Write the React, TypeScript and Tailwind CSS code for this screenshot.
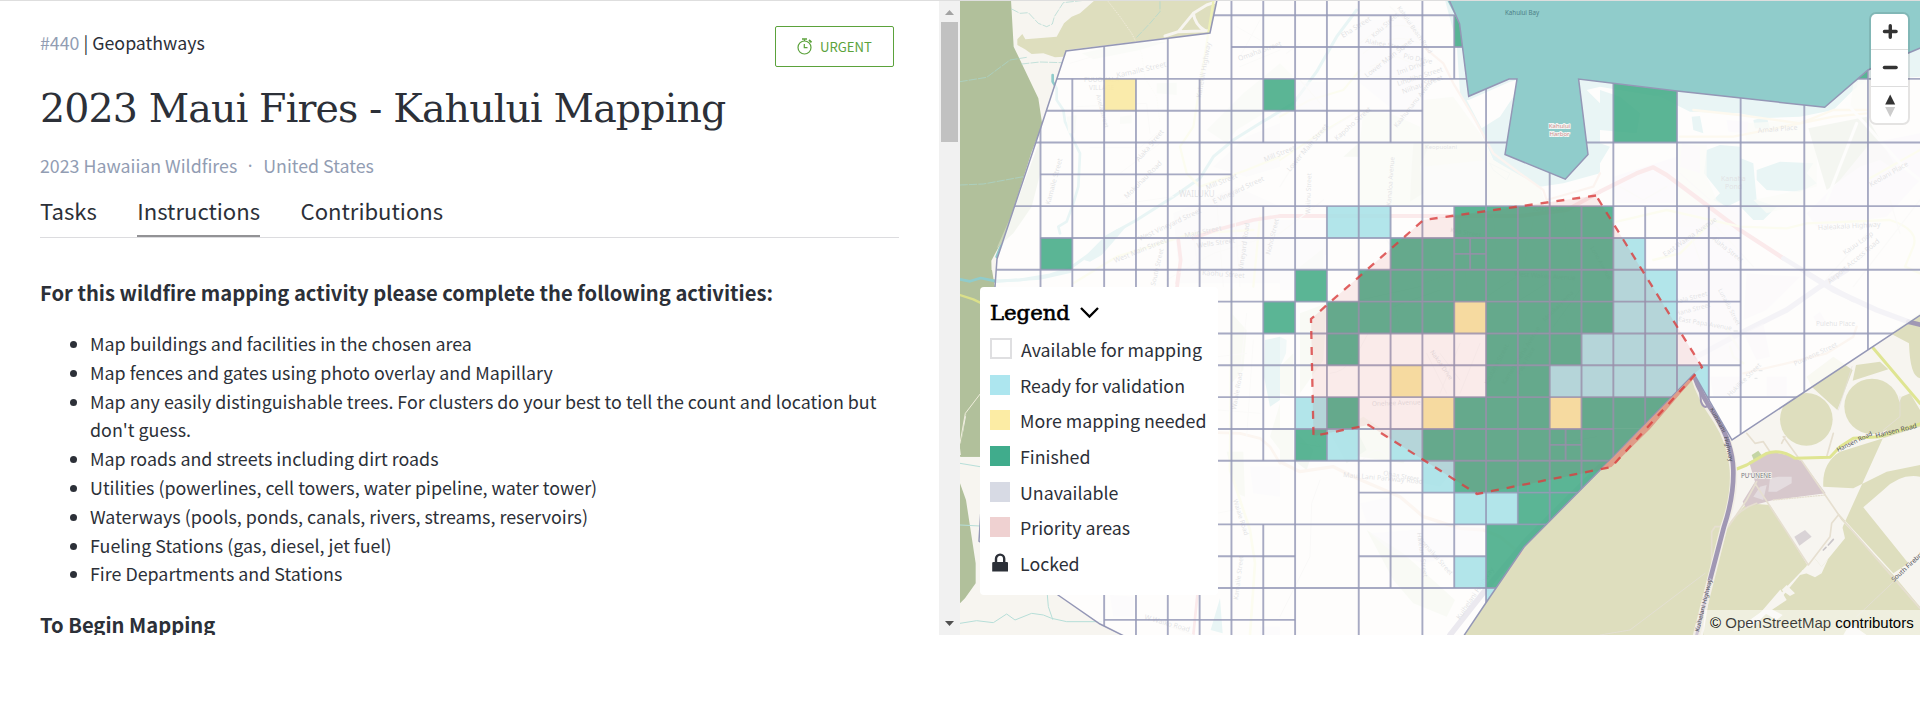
import type { ReactNode } from "react";

const SANS = "font-['Noto_Sans_CJK_SC','Noto_Sans',sans-serif]";
const SLAB = "font-['DejaVu_Serif',serif]";

const activities = [
  "Map buildings and facilities in the chosen area",
  "Map fences and gates using photo overlay and Mapillary",
  "Map any easily distinguishable trees. For clusters do your best to tell the count and location but don't guess.",
  "Map roads and streets including dirt roads",
  "Utilities (powerlines, cell towers, water pipeline, water tower)",
  "Waterways (pools, ponds, canals, rivers, streams, reservoirs)",
  "Fueling Stations (gas, diesel, jet fuel)",
  "Fire Departments and Stations",
];

const legend = [
  { label: "Ready for validation", swatch: "bg-[#ade6ef]" },
  { label: "More mapping needed", swatch: "bg-[#fceca4]" },
  { label: "Finished", swatch: "bg-[#40ac8c]" },
  { label: "Unavailable", swatch: "bg-[#d7dae4]" },
  { label: "Priority areas", swatch: "bg-[#efd1d1]" },
];

/* ---------- task grid ---------- */

const STEP = 31.825;
const gx = (i: number) => 1040.5 + i * STEP;
const gy = (j: number) => 15.2 + j * STEP;

const BOUNDARY =
  "M1218,-5 L1210,33 L1066,51 L1041,127 L997,259 L995,287 L979,541 L1058,595 L1100,624 L1126,637 L1463,637 L1486.5,602 L1524,547 L1613,457 L1694,374 L1732,440 L1925,312 L1925,46 L1868,70 L1824.7,107.3 L1677,91 L1578.6,79 L1588,154.5 L1565.3,179.2 L1505,154.5 L1517,79 L1509,79 L1468.7,96.3 L1459.6,24 L1447,-5 Z";

// [column, row start, row end]
const verticals: [number, number, number][] = [
  [0, 3, 9], [1, 2, 17], [2, 0, 20], [3, 2, 20], [4, 0, 20], [5, 2, 20], [6, -1, 20],
  [7, -1, 4], [7, 6, 14], [7, 16, 20], [8, -1, 20], [9, -1, 4], [9, 6, 14], [10, -1, 20],
  [11, 0, 4], [11, 6, 18], [12, -1, 20], [13, 0, 2], [13, 6, 18], [13.5, 7, 8], [14, 1, 20],
  [15, 6, 16], [16, 4, 16], [16.5, 13, 14], [17, 6, 16], [18, 2, 16], [19, 6, 15],
  [20, 2, 14], [21, 6, 13], [22, 2, 16], [24, 2, 14], [26, 0, 12],
];

// [row, column start, column end]
const horizontals: [number, number, number][] = [
  [0, 5, 14], [1, 6, 14], [2, -2, 14], [2, 25, 28], [3, -2, 12], [4, -2, 28], [5, 0, 6],
  [6, -2, 28], [7, 0, 22], [7.5, 13, 14], [8, -2, 28], [9, 5, 22], [10, 5, 28], [11, 5, 22],
  [12, 5, 28], [13, 5, 18], [13.5, 16, 17], [14, 5, 19], [15, 10, 18], [16, 5, 17],
  [17, 5, 8], [17, 10, 14], [18, 5, 16], [19, 2, 8],
];

// [column, row, width, height]
type Cell = [number, number, number, number];

const finished: Cell[] = [
  [0, 7, 1, 1], [7, 2, 1, 1], [13, 0, 1, 1], [8, 8, 1, 1], [7, 9, 1, 1], [18, 2, 2, 2], [25, 1, 1, 1],
  [13, 6, 5, 1], [11, 7, 7, 1], [10, 8, 8, 1], [9, 9, 4, 1], [14, 9, 4, 1], [9, 10, 1, 1],
  [14, 10, 3, 1], [14, 11, 2, 1], [9, 12, 1, 1], [13, 12, 3, 1], [17, 12, 4, 1], [8, 13, 1, 1],
  [12, 13, 8, 1], [13, 14, 6, 1], [15, 15, 3, 1], [14, 16, 3, 2],
];
const ready: Cell[] = [
  [9, 6, 2, 1], [18, 7, 1, 1], [18, 8, 2, 1], [18, 9, 2, 1], [17, 10, 3, 1], [16, 11, 5, 1],
  [8, 12, 1, 1], [9, 13, 1, 1], [11, 13, 1, 1], [12, 14, 1, 1], [13, 15, 2, 1], [13, 17, 1, 1], [14, 18, 1, 1],
];
const moreMapping: Cell[] = [[2, 2, 1, 1], [13, 9, 1, 1], [11, 11, 1, 1], [12, 12, 1, 1], [16, 12, 1, 1]];

function Cells({ cells, fill, opacity }: { cells: Cell[]; fill: string; opacity: number }) {
  return (
    <g fill={fill} fillOpacity={opacity}>
      {cells.map(([i, j, w, h]) => (
        <rect key={`${i}-${j}`} x={gx(i)} y={gy(j)} width={w * STEP} height={h * STEP} />
      ))}
    </g>
  );
}

// [text, x, y, angle, size]
type Label = [string, number, number, number, number];

const streets: Label[] = [
  ["Kamaile Street", 1117, 78, -13, 7.5], ["VILLAGE", 1089, 90, 0, 6.5], ["PUUOHALA", 1084, 82, 0, 6.5],
  ["Kahekili Highway", 1201, 98, -80, 7], ["Omaha Street", 1239, 61, -20, 7], ["Anela Street", 1096, 95, 75, 6],
  ["Alaka Street", 1139, 162, -50, 7], ["Mokuhau Road", 1127, 199, -45, 7], ["Kamaile Street", 1050, 205, -75, 7],
  ["WAILUKU", 1179, 197, 0, 8], ["Mill Street", 1207, 190, -22, 7], ["E Vineyard Street", 1214, 204, -25, 7],
  ["West Vineyard Street", 1140, 241, -25, 7], ["Main Street", 1185, 238, -12, 7], ["Wells Street", 1197, 248, -8, 7],
  ["West Main Street", 1115, 263, -22, 7], ["South Street", 1155, 286, -77, 6.5], ["Vineyard Road", 1243, 270, -82, 7],
  ["Noho Street", 1270, 255, -76, 6.5], ["Kaohu Street", 1202, 275, 4, 7], ["Mill Street", 1265, 162, -22, 7],
  ["Eha Street", 1343, 38, -32, 7], ["Kolu Street", 1374, 38, -42, 6.5], ["Alahee Street", 1365, 43, 10, 6.5],
  ["Lower Main Street", 1367, 78, -38, 7], ["Pio Drive", 1403, 58, 12, 7], ["Imi Drive", 1398, 75, -20, 7],
  ["Liholiho Street", 1398, 86, -18, 7], ["Niihau Street", 1403, 94, -20, 7], ["Kahului Beach Road", 1397, 8, 55, 6],
  ["Kaahumanu Avenue", 1397, 128, -52, 6.5], ["Kapoho Street", 1337, 141, -42, 7], ["Lower Main Street", 1290, 172, -50, 7],
  ["Waiinu Street", 1310, 214, -88, 6.5], ["Kanaloa Avenue", 1391, 206, -86, 6.5], ["Keopuolani", 1425, 149, 0, 6],
  ["KAHULUI", 1533, 211, 0, 7], ["Amala Place", 1758, 133, -5, 7], ["Kanaha", 1721, 181, 0, 7], ["Pond", 1725, 189, 0, 7],
  ["Keolani Place", 1871, 187, -30, 7], ["Haleakala Highway", 1818, 230, -3, 7], ["Kauu Loop", 1845, 255, -35, 7],
  ["Airport Access Road", 1830, 284, -40, 7], ["East Wakea Avenue", 1665, 257, -35, 7], ["Alaha Street", 1712, 240, 38, 6.5],
  ["Kala Street", 1676, 304, -15, 6.5], ["Hana Street", 1676, 316, -15, 6.5], ["East Papa Avenue", 1678, 321, 10, 6.5],
  ["Lunalilo Street", 1718, 290, 62, 6], ["Puunene Street", 1795, 366, -25, 6.5], ["Hukilike Street", 1730, 397, -45, 6.5],
  ["Pulehu Place", 1816, 326, 0, 6.5], ["West Wakea Avenue", 1514, 276, 4, 6.5], ["Kea Street", 1450, 232, 10, 6.5],
  ["Onehee Avenue", 1372, 406, -2, 6.5], ["Ohaa Street", 1383, 475, 10, 6.5], ["Maui Lani Parkway Road", 1343, 477, 5, 7],
  ["Waiale Road", 1233, 500, 72, 6.5], ["Kamaile Street", 1238, 600, -83, 6.5], ["Waiale Road", 1236, 410, -80, 6.5],
  ["W Waiko Road", 1144, 619, 16, 7], ["Halelani Street", 1417, 533, 82, 6.5],
  ["Pomaikai Street", 1418, 540, 48, 6.5], ["Kuihelani Highway", 1460, 620, -56, 7], ["Nakoa Drive", 1430, 352, 55, 6],
  ["Kaulana Street", 1488, 385, -62, 6.5], ["Kamehameha Avenue", 1505, 385, -58, 6.5], ["Papa Place", 1520, 375, -60, 6],
  ["Molokai Hema", 1545, 322, -45, 6], ["Lono Avenue", 1590, 248, 60, 6],
];

const outerLabels: Label[] = [
  ["Hansen Road", 1838, 452, -26, 6.2], ["Hansen Road", 1876, 438, -14, 6.8], ["South Firebreak", 1894, 582, -43, 6.5],
];

function Labels({ items, fill }: { items: Label[]; fill: string }) {
  return (
    <g fill={fill} fontFamily="Noto Sans, sans-serif">
      {items.map(([text, x, y, angle, size], k) => (
        <text key={k} x={x} y={y} fontSize={size} transform={`rotate(${angle} ${x} ${y})`}>{text}</text>
      ))}
    </g>
  );
}

/* Artwork tiles are drafted on a 3x grid and scaled down to map units. */
function Tile({ x, y, children }: { x: number; y: number; children: ReactNode }) {
  return <g transform={`translate(${x} ${y}) scale(.33333)`}>{children}</g>;
}

function BaseMap() {
  return (
    <g fill="none" strokeLinejoin="round" strokeLinecap="round">
      <rect x="960" y="0" width="960" height="636" fill="#f7f5f0" />
      <Tile x={960} y={0}>
        <path fill="#b1c09b" d="M0 0H153L161 140L235 295L247 375L215 455L163 620L130 715L94 782L96 860V1060L60 1190L15 1240L0 1370Z" />
        <path fill="#dedebe" d="M405 0H775L750 98L320 150L310 170L285 172L250 160L215 162L195 148L172 135L172 118L187 102L196 118L290 110L312 70L335 50L360 40Z" />
        <path stroke="#f7f5f0" strokeWidth="9" d="M615 108L655 95L700 40L740 15L770 5M655 95L745 92M700 40Q705 75 735 92" />
        <path stroke="#f0ead9" strokeWidth="3" strokeDasharray="2 6" d="M445 5L480 50L515 100L525 120L545 160L555 235L590 290L600 370" />
        <path stroke="#a9d6cf" strokeWidth="2" strokeDasharray="22 6" d="M155 27L180 40L205 38L235 70L260 80L277 72L283 50L310 8L380 0M0 245L80 232L150 180L200 172M185 192L240 186L305 188M0 555L70 552L190 530M600 5V35L570 70L530 112" />
        <path stroke="#90cccb" strokeWidth="8" d="M278 225V245L290 265V300L310 330L315 365L340 420L360 460L355 560L340 610L320 665L295 680L300 700M110 770L130 720" />
        <path stroke="#90cccb" strokeWidth="9" d="M0 838L60 845L180 840L270 825L330 805L385 765L440 710L530 660L640 590L720 535L760 470L820 420L900 370L1000 310L1070 215L1130 110L1190 30" />
        <path fill="#90cccb" d="M372 780L425 720L470 688L500 678L460 725L425 765L390 785Z" />
        <path fill="#e7eadb" d="M740 390L850 280L960 190V310L830 390L800 430ZM365 160L500 130L620 125L540 150L400 178ZM320 350L350 345L345 400L325 400ZM480 350L515 345V370L480 372ZM590 250L650 248V285L590 280Z" />
        <path fill="#c8d3b5" d="M240 420L241 520L215 620L160 700L110 745L165 620Z" />
        <path fill="#e6dfe6" d="M760 500L860 410L960 370V500L860 530ZM640 640L830 560L960 620V850H660Z" opacity=".6" />
        <path stroke="#edf0b5" strokeWidth="7" d="M760 5L700 380L660 440L680 520L720 560L860 510L960 470M340 850L470 770L700 700L880 690M900 650L880 860" />
        <path stroke="#e8959b" strokeWidth="11" d="M960 648L880 660L760 692L700 715M655 720L662 780L650 870" />
        <path stroke="#ebe6e0" strokeWidth="3" d="M330 190L430 160M350 320L560 310L570 400M390 443L540 443L590 400M480 520L600 430M430 620L640 590M700 700L720 860M770 600L790 860M820 590L840 860M620 840L760 760L960 700M830 80L900 120M840 200L960 150M840 170L900 60" />
      </Tile>
      <Tile x={1280} y={0}>
        <path fill="#90cccb" d="M495 0H960V570H780L640 480L600 390L540 280L530 130Z" />
        <path fill="#f7f5f0" d="M566 300L690 245L712 240L700 290L660 350L605 385L560 300ZM960 520V640H840L780 560L850 550ZM920 270L960 260V310Z" />
        <path fill="#e8ebd8" d="M430 300L520 290L600 400L640 480L780 560L800 618H430Z" />
        <path fill="#eaeedd" d="M240 430H426V618H240ZM250 330L330 340L420 380V426H240ZM0 190L40 230L0 250Z" />
        <path fill="#dbe2c8" d="M400 430H450L420 500L430 580L390 605L395 500ZM190 470L235 430V470ZM60 800L130 745V870H45Z" />
        <path stroke="#efc9b5" strokeWidth="7" d="M430 140L490 190L520 250L580 350L640 460L720 520L790 570L800 600L940 560L960 520" />
        <path stroke="#e8959b" strokeWidth="12" d="M0 648H720L860 630L960 575" />
        <path stroke="#edf0b5" strokeWidth="6" d="M0 350L90 300L190 270L240 210M0 480L120 400L240 330" />
        <path fill="#ece6ec" opacity=".6" d="M50 245H140V330H50ZM240 60H420V330H340L240 250ZM430 500L620 480V618H430ZM0 660H140V870H0Z" />
        <path stroke="#ebe6e0" strokeWidth="4" d="M240 130Q330 50 420 90M250 160Q330 90 420 130M270 200L350 170L420 200M280 230L420 230M330 20L420 100M20 160L60 130M0 560L80 430L240 330M60 240L130 320M0 700L130 600M320 720L420 860M440 720L480 860M540 660L560 860M640 650L660 860M760 660L720 860M850 640L880 860" />
        <path stroke="#d5dccb" strokeWidth="3" d="M630 490L690 520L680 540L640 510Z" />
      </Tile>
      <Tile x={1600} y={0}>
        <path fill="#90cccb" d="M0 0H960V230L800 240L760 270L700 330L600 350L480 355L420 340L270 335L180 290L0 260ZM0 270L60 290L120 340L110 400L0 390ZM0 430L30 440L0 490Z" />
        <path fill="#f7f5f0" d="M775 240H960V300H760Z" opacity=".7" />
        <path fill="#90cccb" d="M320 450L360 435L422 440V600L380 620L340 600L360 580L312 520ZM422 475L460 490L470 600L530 620L490 660H460L422 620ZM275 350L300 348L310 400L280 390ZM460 360L500 350L510 385L465 385ZM470 510L540 485L640 490L620 520L650 550L600 575L500 570L470 540Z" />
        <path fill="#e9ecd9" opacity=".7" d="M232 435H320V530L350 600L422 650V680H232ZM430 370L612 360V610L500 640L460 600L650 560V430H440ZM760 250L806 235V330H750Z" />
        <path fill="#c9d2ba" d="M625 385L800 350L900 520L840 480L780 500L680 570Z" />
        <path fill="#ece4ec" d="M140 290L230 280V426H180L150 400ZM380 360L445 365L440 400L385 395ZM810 430L960 400V540L860 650L650 680L620 640L720 540ZM245 430L300 440V520L240 500ZM232 620H422V870H232ZM40 530L230 470L225 610H50Z" opacity=".8" />
        <path stroke="#e8959b" strokeWidth="13" d="M0 575L110 520L160 502L200 525L420 690L550 775" />
        <path stroke="#c9c2d4" strokeWidth="14" d="M550 775L690 860L760 900" />
        <path stroke="#f2dfae" strokeWidth="7" d="M280 330L420 345L600 370L700 330L800 330M240 410L400 410L700 350L800 340" />
        <path stroke="#edf0b5" strokeWidth="7" d="M50 665L200 630L420 680L560 685L620 670L870 660Q960 690 940 740L915 800L960 820M810 535L960 450M160 780L240 760L330 670" />
        <path stroke="#f6f2ee" strokeWidth="9" d="M740 310L910 500L960 540M770 370L680 600" />
        <path stroke="#ebe6e0" strokeWidth="4" d="M760 860L960 600M650 870L800 700M340 670L460 800M270 700L330 860M60 560L130 600L200 560M240 520L330 600M870 600L900 700" />
      </Tile>
      <Tile x={960} y={270}>
        <path fill="#b1c09b" d="M0 0H96L105 55H60V380L15 440L0 500V555H65V560H0ZM0 640L18 690L47 880V940L15 985L0 1000Z" />
        <path stroke="#f0eedd" strokeWidth="3" d="M62 370L16 430L0 520" />
        <path fill="#b1c09b" d="M62 374L19 432L3 520V560H62Z" />
        <path stroke="#90cccb" strokeWidth="8" d="M0 28L30 34L62 24L110 34L240 25L330 5" />
        <path stroke="#dbe08a" strokeWidth="7" d="M0 75L40 88L65 100" />
        <path stroke="#b6ded8" strokeWidth="3" d="M0 1060L50 1052L100 1058L140 1032L165 1050L215 1030L250 1035L275 1045L320 1055H425M262 975L265 1010L278 1048M0 765L60 768M0 580L60 590" />
        <path fill="#90cccb" d="M915 210L960 200V390L930 410L912 320ZM752 1080L780 985L788 1090Z" />
        <path fill="#dfe6cc" d="M770 80L860 180L850 300L815 340V130ZM800 545L850 545L855 680L830 670ZM960 400V540L930 500Z" />
        <path stroke="#f0cfb8" strokeWidth="8" d="M774 488L840 490L900 505L930 530L960 580" />
        <path stroke="#edf0b5" strokeWidth="8" d="M815 60L810 600L870 780L885 880L870 1095" />
        <path stroke="#e8959b" strokeWidth="8" d="M655 0L650 40M712 975L700 1095" />
        <path fill="#ece6ec" opacity=".7" d="M870 590H960V680L880 670ZM450 975L520 980V1040H460ZM900 1070H960V1095H900Z" />
        <path stroke="#ebe6e0" strokeWidth="3" d="M774 260L860 250M860 130L830 400M774 420L900 430M880 210L860 500M770 730L820 720M560 1045L700 1095" />
      </Tile>
      <Tile x={1280} y={270}>
        <path fill="#dedebe" d="M960 596L730 830L552 1095H960Z" />
        <path fill="#dfe6cc" d="M0 290L40 250V380L0 370ZM60 130L140 100L130 270L60 370ZM0 480H40V570H0ZM180 480L250 440L400 540L370 580L240 560ZM260 780L370 850L525 990L500 1040L400 1000L340 930Z" />
        <path fill="#b1c9a4" d="M140 470L230 480L260 540L200 580ZM50 490L100 540L80 600L40 570Z" opacity=".6" />
        <path fill="#90cccb" d="M0 200L20 210L18 250L0 290ZM430 590L520 600L480 650L430 640Z" opacity=".6" />
        <path stroke="#f0cfb8" strokeWidth="10" d="M0 575L60 605L160 590L220 620L360 680L430 740L540 775L610 780L660 800L720 850" />
        <path stroke="#9a8fb0" strokeWidth="17" d="M960 590L740 810L640 930L510 1095" />
        <path fill="#ece6ec" opacity=".6" d="M240 700L330 680V760H260ZM270 790L510 770L520 860L430 880L340 850ZM430 770H610V860H430Z" />
        <path stroke="#e5dfdb" strokeWidth="3" d="M270 0V180L210 290M330 20L360 180M430 40L540 0M440 250L500 370M480 250L540 330M540 220L480 370M600 220L540 370M700 190L640 330M740 200L690 330M810 20L870 180M150 310Q240 300 210 180M60 520Q100 480 140 560M240 580Q300 500 330 580M0 1040L40 960L90 860L95 700L120 630" />
        <path stroke="#5c6f66" strokeWidth="2" opacity=".4" d="M240 90L420 50M340 110L480 60M620 80L710 20M720 90L800 40M820 170L900 60M60 520L120 530M840 520L950 500" />
      </Tile>
      <Tile x={1600} y={270}>
        <path fill="#dedebe" d="M0 596L283 310L330 400L395 520L403 600L375 770L290 1095H0ZM340 900L380 770L440 700L510 705L622 885L540 960L480 1030L390 1095H310ZM635 350L712 420L758 300L700 260L620 320ZM768 285L840 275L865 298L758 332ZM870 190L960 130V325Q930 320 927 220ZM905 380L930 370L960 420V470L720 545Q665 580 670 650L760 655L860 605L960 585V620Q900 610 850 660L790 712L925 880L880 910L715 730L735 805L665 890L640 860L690 800L715 740L880 915L960 1010V1095H380L500 1030L560 990L530 940L625 885L665 910Z" />
        <path fill="#f7f5f0" d="M605 900L650 895L665 910L645 922L615 908ZM560 945L585 970L570 978L545 960ZM500 1010L548 1035L530 1050L495 1030ZM400 1085L520 1000L560 950L620 888L640 870L665 890L640 905L600 915L530 1000L470 1060ZM750 1060L800 1095H730Z" />
        <circle cx="619" cy="448" r="79" fill="#dedebe" />
        <circle cx="816" cy="409" r="83" fill="#dedebe" />
        <path fill="#f7f5f0" d="M520 700L677 672L720 740L735 805L665 890L640 860L622 885Z" />
        <path fill="#d7c8cc" d="M447 575L515 545L560 555L605 572L677 670L520 690L437 712L428 695L465 635Z" />
        <path fill="#d9d3d6" d="M583 800L615 780L635 800L598 827Z" />
        <path fill="#e4dcdf" d="M510 625L535 620L575 620V640L530 665H505ZM480 650L500 645L490 690L460 680Z" />
        <path fill="#c4d5a5" d="M455 555L475 542L485 556L462 572Z" />
        <path stroke="#e6dfd0" strokeWidth="5" d="M440 490L465 520L490 515L510 545M550 500L600 570M545 520L555 500M700 490L680 560M605 572L720 740L960 1015M465 640L625 885L690 800L695 760L715 735M470 635L440 690L385 770M345 770L335 785V890L320 940M470 700Q410 720 385 770L345 770" />
        <path stroke="#e6dfdc" strokeWidth="2" d="M0 1095L90 1080L315 910M770 1040L960 860M756 290L715 420M900 380V440L850 480" />
        <path stroke="#e6dfd0" strokeWidth="4" strokeDasharray="3 5" d="M520 690L677 675" />
        <path stroke="#dfe592" strokeWidth="9" d="M403 600L440 585L500 550Q540 535 585 565L690 562L720 530L760 505L840 500L960 462M820 235L960 400" />
        <path stroke="#f2eee6" strokeWidth="22" d="M283 318Q300 380 350 450Q395 520 400 600T372 770L290 1095" />
        <path stroke="#a097b4" strokeWidth="14" d="M283 318Q300 370 345 435Q398 520 400 600T372 770L330 930" />
        <path stroke="#cfc8d6" strokeWidth="9" d="M330 930L290 1095" />
        <path stroke="#a097b4" strokeWidth="6" d="M297 330L303 395Q312 420 325 405" />
        <path stroke="#c9c2d4" strokeWidth="16" d="M290 260L420 190L560 120L660 50L740 0M620 10L700 60L830 120L925 155" />
        <path stroke="#a097b4" strokeWidth="14" d="M925 155L975 168" />
        <path stroke="#edf0b5" strokeWidth="7" d="M390 230L400 260L430 280M380 180L420 240" />
        <path stroke="#f0cfb8" strokeWidth="7" d="M430 310L560 280L680 250L760 200L770 170" />
        <path fill="#e6deea" d="M430 190L490 160L510 260L470 270ZM640 140L660 125L680 160L655 170ZM235 10H420V280H235ZM440 10L600 20L500 120L430 150ZM500 320H560V380H500ZM330 320H420V380H340Z" opacity=".6" />
        <path stroke="#8c8f96" strokeWidth="4" d="M402 183H412M478 302H486M465 325H471" />
        <path stroke="#c9c5c8" strokeWidth="5" d="M670 840L678 832M685 825L700 808" />
      </Tile>
      <Labels items={streets} fill="#6d6d76" />
      <Labels items={outerLabels} fill="#55555d" />
      <text x="1741" y="477.5" fontSize="6.2" fill="#77777d" stroke="#f7f5f0" strokeWidth="1.5" paintOrder="stroke" fontFamily="Noto Sans">PU'UNENE</text>
      <g fill="#55555d" fontSize="6.2" fontFamily="Noto Sans">
        <text transform="translate(1710 409) rotate(62)">Kuihelani</text>
        <text transform="translate(1724 437) rotate(78)">Highway</text>
        <text transform="translate(1699 632) rotate(-76)">Kuihelani Highway</text>
      </g>
    </g>
  );
}

function TaskMap() {
  return (
    <svg className="block h-full w-full" viewBox="960 1 960 634" preserveAspectRatio="none">
      <defs>
        <clipPath id="area"><path d={BOUNDARY} /></clipPath>
      </defs>
      <BaseMap />
      <path d={BOUNDARY} fill="#fff" fillOpacity=".8" />
      <g clipPath="url(#area)">
        <Cells cells={finished} fill="#40a983" opacity={0.86} />
        <Cells cells={ready} fill="#a5e1e7" opacity={0.86} />
        <Cells cells={moreMapping} fill="#fae9a2" opacity={0.9} />
        <g stroke="#9497b6" strokeOpacity=".82" strokeWidth="1.9">
          {verticals.map(([i, a, b]) => <line key={`v${i}-${a}`} x1={gx(i)} x2={gx(i)} y1={gy(a)} y2={gy(b)} />)}
          {horizontals.map(([j, a, b]) => <line key={`h${j}-${a}`} x1={gx(a)} x2={gx(b)} y1={gy(j)} y2={gy(j)} />)}
        </g>
      </g>
      {/* open water of the bay */}
      <path fill="#90cccb" d="M1447 0L1459.6 24L1468.7 96.3L1509 79H1517L1505 154.5L1565.3 179.2L1588 154.5L1578.6 79L1677 91L1824.7 107.3L1868 70L1920 48V0Z" />
      <path d={BOUNDARY} fill="none" stroke="#9497b6" strokeWidth="1.5" />
      <path fill="#d73232" fillOpacity=".09" d="M1596 195.5L1423.5 220L1311 319L1313.5 436L1368.5 425L1477 494L1600 470L1694 374L1702 367Z" />
      <path fill="#e09c88" d="M1694 374.5L1613 457.5L1600 470L1611.5 467L1650 429L1680 394L1696 376Z" />
      <path fill="none" stroke="#d9403f" strokeOpacity=".82" strokeWidth="2.3" strokeDasharray="8 8" d="M1596 195.5L1423.5 220L1311 319L1313.5 436L1368.5 425L1477 494L1611.5 467L1702 367Z" />
      <text x="1505" y="14.5" fontSize="6.2" fill="#4d7f86" fontFamily="Noto Sans">Kahului Bay</text>
      <g fontSize="6" textAnchor="middle" fill="#cf8f8f" stroke="#f3f6f4" strokeWidth="1.8" paintOrder="stroke" fontFamily="Noto Sans">
        <text x="1559.5" y="128">Kahului</text>
        <text x="1559.5" y="135.5">Harbor</text>
      </g>
    </svg>
  );
}

/* ---------- panels ---------- */

function Stopwatch() {
  return (
    <svg width="16" height="17" viewBox="0 0 16 17" fill="none" stroke="#5ba23b" strokeWidth="1.2">
      <circle cx="7.5" cy="9.5" r="6.5" />
      <path d="M7.3 6V9.7H10.5M7.5 3V1.2" />
      <path d="M5 1H10" strokeWidth="1.5" />
      <path d="M12 2L14.5 4.3" strokeWidth="1.8" />
    </svg>
  );
}

function ProjectPanel() {
  return (
    <section className="flex h-full w-[939px] shrink-0 flex-col overflow-hidden pl-10 pr-[40px] text-[#2c3038]">
      <div className="flex h-[78px] shrink-0 items-start justify-between">
        <p className="mt-[27px] text-[17.8px] leading-[28px]">
          <span className="text-[#929db3]">#440</span> | Geopathways
        </p>
        <div className="mr-[5px] mt-[25px] flex h-[41px] w-[119px] items-center rounded-[2px] border border-[#5ba23b] pl-[21px] text-[#5ba23b]">
          <Stopwatch />
          <span className="ml-[7px] mt-px text-[13.1px] leading-[20px]">URGENT</span>
        </div>
      </div>
      <h1 className={`mt-[3px] shrink-0 whitespace-nowrap text-[39.5px] tracking-[-0.86px] leading-[52px] ${SLAB}`}>2023 Maui Fires - Kahului Mapping</h1>
      <p className="mt-[17px] flex shrink-0 text-[17.8px] leading-[28px] text-[#929db3]">
        <span>2023 Hawaiian Wildfires</span>
        <span className="w-[26px] text-center font-['Noto_Sans',sans-serif]">·</span>
        <span>United States</span>
      </p>
      <nav className="mt-[14px] flex h-[45px] w-[859px] shrink-0 gap-[40.5px] border-b border-[#dcdcdf] pt-px text-[22.1px] leading-[32px]">
        <span>Tasks</span>
        <span className="h-[43px] border-b-2 border-[#929295]">Instructions</span>
        <span>Contributions</span>
      </nav>
      <h2 className="mt-[41px] shrink-0 text-[20.18px] font-bold leading-[28px]">For this wildfire mapping activity please complete the following activities:</h2>
      <ul className="mt-[22px] shrink-0 pl-[30px] text-[17.88px] leading-[28.8px]">
        {activities.map((item) => (
          <li key={item} className="flex">
            <span className="mr-[13px] mt-[12px] h-[7px] w-[7px] shrink-0 rounded-full bg-[#2c3038]" />
            <span className="w-[800px]">{item}</span>
          </li>
        ))}
      </ul>
      <h2 className="mt-[23px] shrink-0 text-[20.18px] font-bold leading-[28px]">To Begin Mapping</h2>
    </section>
  );
}

function Scrollbar() {
  return (
    <div className="flex h-full w-[21px] shrink-0 flex-col items-center bg-[#f1f1f1]">
      <svg className="block h-[21px] w-[21px]" viewBox="0 0 21 21"><path d="M6 14H15L10.5 9Z" fill="#a3a3a3" /></svg>
      <div className="h-[120px] w-[17px] bg-[#c1c1c1]" />
      <svg className="mt-auto block h-[21px] w-[21px]" viewBox="0 0 21 21"><path d="M6 7H15L10.5 12Z" fill="#505050" /></svg>
    </div>
  );
}

function Legend() {
  return (
    <div className="absolute left-[20px] top-[286px] h-[308px] w-[238px] rounded-[4px] bg-white pl-[10px] pt-[8px] text-[17.8px] text-[#2c3038]">
      <div className="flex h-[36px] items-center">
        <span className={`text-[21.2px] leading-[32px] text-black [-webkit-text-stroke:0.6px_black] ${SLAB}`}>Legend</span>
        <svg className="ml-[10px]" width="19" height="12" viewBox="0 0 19 12" fill="none" stroke="#000" strokeWidth="2.3"><path d="M1 1L9.500 9.500L18 1" /></svg>
      </div>
      <div className="flex h-[35.7px] items-center">
        <span className="h-[21px] w-[22px] border-2 border-[#dfdfe1]" />
        <span className="ml-[9px] leading-[28px]">Available for mapping</span>
      </div>
      {legend.map(({ label, swatch }) => (
        <div key={label} className="flex h-[35.7px] items-center">
          <span className={`h-[20px] w-[20px] ${swatch}`} />
          <span className="ml-[10px] whitespace-nowrap leading-[28px]">{label}</span>
        </div>
      ))}
      <div className="flex h-[35.7px] items-center">
        <svg width="20" height="20" viewBox="0 0 20 20"><path fill="#2c3038" d="M3.5 9H17Q18 9 18 10V18.5H2.2V10Q2.2 9 3.5 9Z" /><path d="M6 9.5V5.7A4.1 4.1 0 0 1 14.2 5.7V9.5" fill="none" stroke="#2c3038" strokeWidth="2.4" /></svg>
        <span className="ml-[10px] leading-[28px]">Locked</span>
      </div>
    </div>
  );
}

function MapControls() {
  return (
    <div className="absolute right-[12px] top-[13px] flex w-[37px] flex-col divide-y divide-[#ddd] rounded-[5px] bg-white shadow-[0_0_0_2px_rgba(0,0,0,0.1)]">
      <svg className="block h-[36px] w-full" viewBox="0 0 37 36"><path d="M13.3 18H25.3M19.3 12V24" stroke="#333" strokeWidth="3.5" strokeLinecap="round" /></svg>
      <svg className="block h-[37px] w-full" viewBox="0 0 37 37"><path d="M13.3 18H25.3" stroke="#333" strokeWidth="3.5" strokeLinecap="round" /></svg>
      <svg className="block h-[36px] w-full" viewBox="0 0 37 36"><path d="M14.2 17.500H24.200L19.200 7.500Z" fill="#333" /><path d="M14.2 20H24.200L19.200 30Z" fill="#ccc" /></svg>
    </div>
  );
}

export default function App() {
  return (
    <main className={`h-[712px] w-[1920px] overflow-hidden bg-white ${SANS}`}>
      <div className="flex h-[635px] border-t border-[#dedede]">
        <ProjectPanel />
        <Scrollbar />
        <div className="relative h-full w-[960px] overflow-hidden">
          <TaskMap />
          <Legend />
          <MapControls />
          <div className="absolute bottom-0 right-0 h-[25px] w-[216px] whitespace-nowrap bg-white/50 pl-[6px] font-['Liberation_Sans',Arial,sans-serif] text-[15px] leading-[25px] text-black">
            © <span className="text-black/75">OpenStreetMap</span> contributors
          </div>
        </div>
      </div>
    </main>
  );
}
